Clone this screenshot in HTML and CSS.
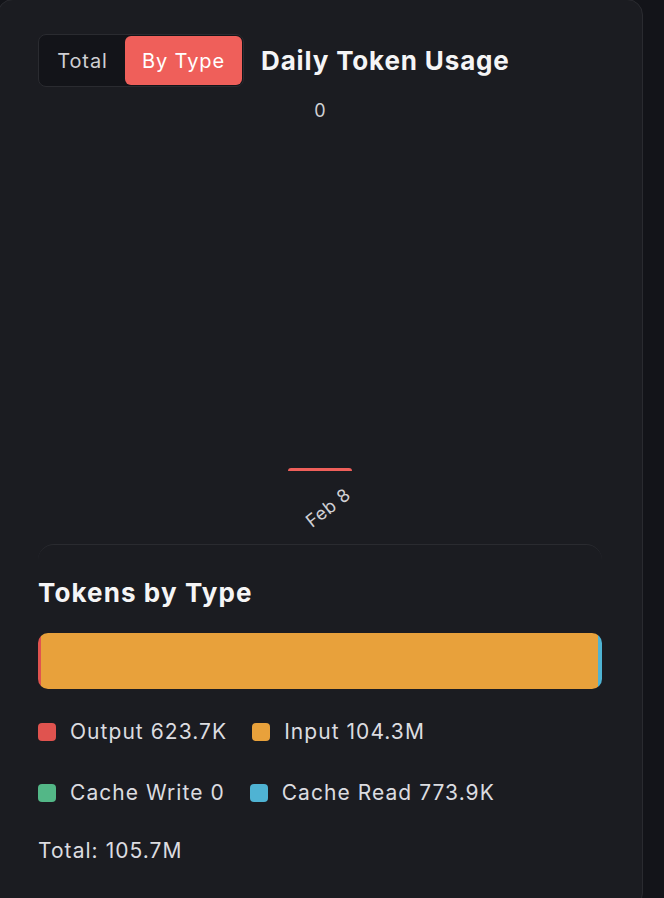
FILE: index.html
```html
<!DOCTYPE html>
<html lang="en">
<head>
<meta charset="utf-8">
<title>Daily Token Usage</title>
<link rel="stylesheet" href="styles.css">
</head>
<body>
<div class="card">
  <div class="header">
    <div class="toggle">
      <button class="toggle-btn">Total</button>
      <button class="toggle-btn active">By Type</button>
    </div>
    <h2 class="title">Daily Token Usage</h2>
  </div>
  <div class="chart">
    <div class="value-label">0</div>
    <div class="plot-space"></div>
    <div class="bar"></div>
    <div class="x-label">Feb 8</div>
  </div>
  <div class="type-card">
    <h3 class="title title-sub">Tokens by Type</h3>
    <div class="stack">
      <div class="seg seg-output" style="width:0.59%"></div>
      <div class="seg seg-input" style="width:98.68%"></div>
      <div class="seg seg-cwrite" style="width:0%"></div>
      <div class="seg seg-cread" style="width:0.73%"></div>
    </div>
    <div class="legend">
      <div class="legend-item"><span class="swatch sw-output"></span>Output 623.7K</div>
      <div class="legend-item"><span class="swatch sw-input"></span>Input 104.3M</div>
      <div class="legend-item"><span class="swatch sw-cwrite"></span>Cache Write 0</div>
      <div class="legend-item"><span class="swatch sw-cread"></span>Cache Read 773.9K</div>
    </div>
    <div class="total">Total: 105.7M</div>
  </div>
</div>
</body>
</html>
```
FILE: styles.css
```css
* { box-sizing: border-box; }
html, body {
  margin: 0;
  padding: 0;
  background: #131419;
  overflow: hidden;
}
body {
  font-family: Inter, "Noto Sans", sans-serif;
  color: #e4e4e7;
}
.card {
  margin: -1px 0 0 -3px;
  width: 646px;
  height: 910px;
  background: #1b1c21;
  border: 1px solid #2a2b30;
  border-radius: 16px;
  padding: 34px 40px 0 40px;
}
.header {
  display: flex;
  align-items: center;
  gap: 17px;
}
.toggle {
  display: flex;
  padding: 1px;
  background: #131419;
  border: 1px solid #2a2b30;
  border-radius: 8px;
}
.toggle-btn {
  font-family: inherit;
  font-size: 20px;
  letter-spacing: 0.9px;
  height: 49px;
  width: 85px;
  border: 0;
  border-radius: 6px;
  background: transparent;
  color: #cfcfd3;
  padding: 0;
  margin: 0;
  text-align: center;
}
.toggle-btn.active {
  width: 117px;
  background: #ef5f5a;
  color: #ffffff;
}
.title {
  margin: 0;
  font-size: 26px;
  line-height: 32px;
  font-weight: 700;
  color: #f5f5f6;
  letter-spacing: 0.85px;
}
.title-sub {
  letter-spacing: 1.1px;
}
.chart {
  height: 457px;
  display: flex;
  flex-direction: column;
  align-items: center;
}
.value-label {
  margin-top: 14px;
  font-size: 18px;
  line-height: 20px;
  color: #d0d0d4;
}
.plot-space { flex: 1; }
.bar {
  width: 64px;
  height: 3px;
  background: #ef5f5a;
  border-radius: 3px 3px 0 0;
}
.x-label {
  margin: 27px 0 26px;
  font-size: 18px;
  letter-spacing: 0.6px;
  line-height: 20px;
  color: #d0d0d4;
  transform: translateX(8px) rotate(-38deg);
}
.type-card {
  border-top: 1px solid #2a2b30;
  border-radius: 16px;
  padding-top: 32px;
}
.stack {
  margin-top: 24px;
  height: 56px;
  display: flex;
  border-radius: 10px;
  overflow: hidden;
}
.seg { height: 100%; }
.seg-output, .sw-output { background: #e0534f; }
.seg-input, .sw-input { background: #e8a13b; }
.seg-cwrite, .sw-cwrite { background: #53b787; }
.seg-cread, .sw-cread { background: #4fb3d3; }
.legend {
  margin-top: 29px;
  display: flex;
  flex-wrap: wrap;
  column-gap: 25px;
  row-gap: 33px;
}
.legend-item {
  display: flex;
  align-items: center;
  gap: 14px;
  font-size: 21px;
  letter-spacing: 1.05px;
  line-height: 28px;
  color: #dcdce0;
}
.legend-item:nth-child(2) { margin-right: 100px; }
.swatch {
  width: 18px;
  height: 18px;
  border-radius: 4px;
}
.total {
  margin-top: 30px;
  font-size: 21px;
  letter-spacing: 1.05px;
  line-height: 28px;
  color: #dcdce0;
}
```
